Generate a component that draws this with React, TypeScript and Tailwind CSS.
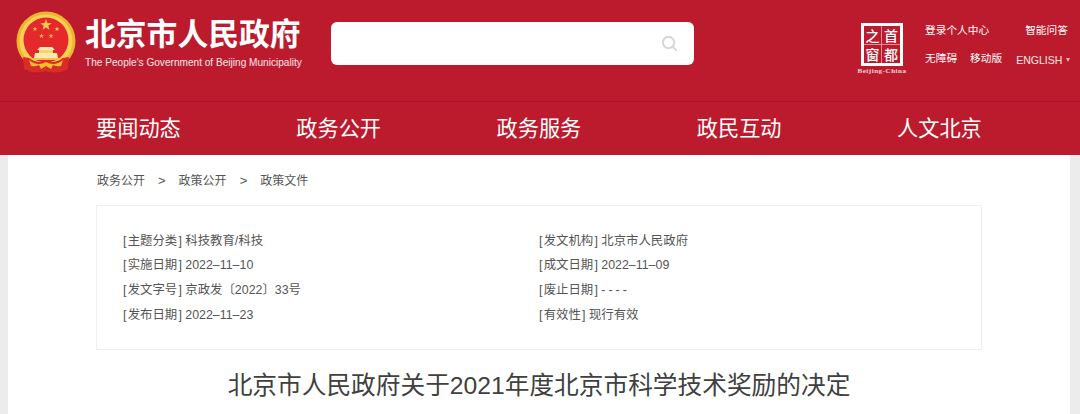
const FONT = "font-['Liberation_Sans','Noto_Sans_CJK_SC',sans-serif]";

const navItems = ["要闻动态", "政务公开", "政务服务", "政民互动", "人文北京"];

const metaLeft = [
  ["主题分类", "科技教育/科技"],
  ["实施日期", "2022–11–10"],
  ["发文字号", "京政发〔2022〕33号"],
  ["发布日期", "2022–11–23"],
];

const metaRight = [
  ["发文机构", "北京市人民政府"],
  ["成文日期", "2022–11–09"],
  ["废止日期", "----"],
  ["有效性", "现行有效"],
];

const starPoints = (cx: number, cy: number, r: number) =>
  Array.from({ length: 10 }, (_, i) => {
    const radius = i % 2 === 0 ? r : r * 0.4;
    const angle = -Math.PI / 2 + (i * Math.PI) / 5;
    return `${cx + radius * Math.cos(angle)},${cy + radius * Math.sin(angle)}`;
  }).join(" ");

const Emblem = () => (
  <svg viewBox="0 0 62 64" className="w-[62px] h-[64px] shrink-0">
    {/* gold wheat ring */}
    <circle cx="31" cy="30" r="29.5" fill="#eeb52e" />
    <circle cx="31" cy="30" r="26.5" fill="#f6cf55" />
    <circle cx="31" cy="29" r="22.5" fill="#e5282b" />
    {/* stars */}
    <polygon points={starPoints(31, 14, 6)} fill="#f4c84a" />
    <polygon points={starPoints(20, 18, 2.6)} fill="#f4c84a" />
    <polygon points={starPoints(42, 18, 2.6)} fill="#f4c84a" />
    <polygon points={starPoints(26.5, 25, 2.6)} fill="#f4c84a" />
    <polygon points={starPoints(36, 25, 2.6)} fill="#f4c84a" />
    {/* gate */}
    <path d="M25 36 L37 36 L40 39 L22 39 Z" fill="#fbe9b0" />
    <rect x="24" y="39" width="14" height="3" fill="#f7d76c" />
    <path d="M20 42 L42 42 L43 47 L19 47 Z" fill="#fbe9b0" />
    <rect x="13" y="47" width="36" height="2" fill="#f3c33f" />
    {/* ribbon */}
    <path d="M8 46 L14 47 Q22 53 31 50 Q40 53 48 47 L54 46 L53 58 Q42 64 31 60 Q20 64 9 58 Z" fill="#dc2a26" />
    <path d="M14 49 Q22 56 31 51 Q40 56 48 49 L46 55 Q42 56 38 54 L36 58 L31 55 L26 58 L24 54 Q20 56 16 55 Z" fill="#f2bd35" />
  </svg>
);

const CapitalLogo = () => (
  <div className="flex flex-col items-center w-[50px]">
    <div className="w-[42px] h-[43px] border-[3px] border-white grid grid-cols-2 grid-rows-2 text-white text-[14px] leading-none font-medium font-['Noto_Sans_CJK_SC',serif]">
      <span className="flex items-center justify-center border-r border-b border-white/50">之</span>
      <span className="flex items-center justify-center border-b border-white/50">首</span>
      <span className="flex items-center justify-center border-r border-white/50">窗</span>
      <span className="flex items-center justify-center">都</span>
    </div>
    <span className="text-[7px] leading-[10px] text-white/80 font-['Liberation_Serif',serif] font-bold tracking-[0.55px] whitespace-nowrap">
      Beijing-China
    </span>
  </div>
);

const MetaColumn = ({ rows, className }: { rows: string[][]; className: string }) => (
  <div className={className}>
    {rows.map(([k, v]) => (
      <div key={k} className="h-[24.7px] leading-[24.7px] whitespace-nowrap">
        <span className="mr-[1.2px]">[</span>
        {k}
        <span className="ml-[1.2px]">]</span>{" "}
        <span className={v === "----" ? "tracking-[3px]" : ""}>{v}</span>
      </div>
    ))}
  </div>
);

export default function App() {
  return (
    <div className={`${FONT} w-[1080px] h-[414px] overflow-hidden bg-[#ececec]`}>
      {/* header */}
      <header className="h-[155px] bg-[#bb1b2d] flex flex-col">
        <div className="h-[102px] shrink-0 flex items-start border-b border-[#a31627]">
          <div className="ml-[15px] mt-[11px]">
            <Emblem />
          </div>
          <div className="ml-[8px] mt-[18px] w-[231px] text-white">
            <div className="text-[30.8px] leading-[33px] font-bold whitespace-nowrap">北京市人民政府</div>
            <div className="text-[10.1px] leading-[14px] mt-[5px] whitespace-nowrap text-white/90">
              The People's Government of Beijing Municipality
            </div>
          </div>
          <div className="ml-[15px] mt-[22px] w-[363px] h-[43px] bg-white rounded-[6px] flex items-center justify-end pr-[16px]">
            <svg viewBox="0 0 18 18" className="w-[17px] h-[17px]" fill="none" stroke="#d8d8d8" strokeWidth="2.2">
              <circle cx="8" cy="8" r="6" />
              <path d="M12.5 12.5 L16 16" strokeLinecap="round" />
            </svg>
          </div>
          <div className="ml-[163px] mt-[23px]">
            <CapitalLogo />
          </div>
          <div className="ml-[18px] mt-[22px] w-[154px] text-white text-[10.7px] leading-[16px] whitespace-nowrap">
            <div className="flex">
              <span>登录个人中心</span>
              <span className="ml-[36px]">智能问答</span>
            </div>
            <div className="flex items-start mt-[11.5px]">
              <span>无障碍</span>
              <span className="ml-[13px]">移动版</span>
              <span className="ml-[14px] mt-[2.5px] flex items-center gap-[4px] text-[10.5px] text-white/90">
                ENGLISH
                <span className="w-0 h-0 border-x-[2.5px] border-x-transparent border-t-[4px] border-t-[#e8b4a0]" />
              </span>
            </div>
          </div>
        </div>
        <nav className="flex-1 flex items-center justify-between pl-[96px] pr-[98px]">
          {navItems.map((label) => (
            <span key={label} className="w-[85px] text-white text-[21.2px] leading-none whitespace-nowrap">
              {label}
            </span>
          ))}
        </nav>
      </header>

      {/* page body */}
      <main className="ml-[8px] mr-[10px] h-[259px] bg-white pl-[88px] text-[#555]">
        <div className="h-[50px] pt-[1px] pl-[1px] flex items-center text-[12px]">
          <span>政务公开</span>
          <span className="mx-[13px] text-[13px]">&gt;</span>
          <span>政策公开</span>
          <span className="mx-[13px] text-[13px]">&gt;</span>
          <span>政策文件</span>
        </div>
        <section className="w-[886px] h-[145px] border border-[#f0efe9] flex pt-[22.5px] text-[12.4px]">
          <MetaColumn rows={metaLeft} className="ml-[26px] w-[416px]" />
          <MetaColumn rows={metaRight} className="" />
        </section>
        <h1 className="mt-[18px] w-[886px] text-center text-[24.7px] leading-[36px] text-[#404040] font-normal whitespace-nowrap">
          北京市人民政府关于2021年度北京市科学技术奖励的决定
        </h1>
      </main>
    </div>
  );
}
